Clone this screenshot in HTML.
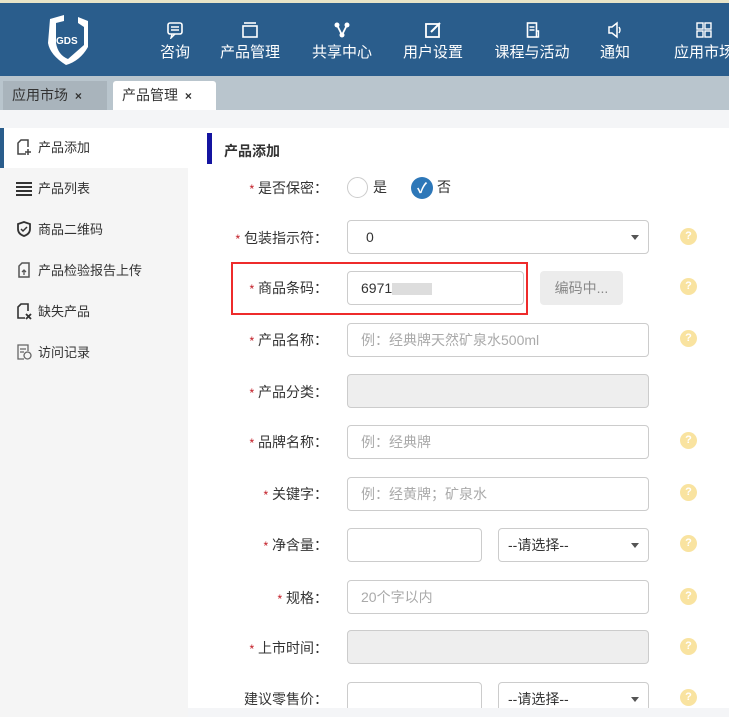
<!DOCTYPE html>
<html><head><meta charset="utf-8"><style>
*{margin:0;padding:0;box-sizing:border-box}
body{width:729px;height:717px;overflow:hidden;background:#fff;font-family:"Liberation Sans","Noto Sans CJK SC",sans-serif;position:relative}
.a{position:absolute}
.hdr{left:0;top:0;width:729px;height:76px;background:#2a5d8c;border-top:3px solid #e8e4c8}
.nav{position:absolute;top:0;height:73px;color:#fff;font-size:15px;text-align:center;transform:translateX(-50%);white-space:nowrap}
.nav svg{display:block;margin:18px auto 2px}
.tabs{left:0;top:76px;width:729px;height:34px;background:#b9c5cd}
.tab{position:absolute;top:5px;height:29px;font-size:14px;line-height:29px;padding-left:9px;color:#333}
.side{left:0;top:128px;width:188px;height:589px;background:#f5f5f5}
.si{position:absolute;left:16px;font-size:13px;color:#333;height:20px;line-height:20px}
.si svg{position:absolute;left:0;top:1px}
.si span{position:absolute;left:22px;white-space:nowrap}
.lbl{position:absolute;right:401px;font-size:14px;color:#333;white-space:nowrap}
.lbl b{color:#c0141e;font-weight:normal;font-size:12px}
.in{position:absolute;height:34px;border:1px solid #ccc;border-radius:4px;background:#fff;font-size:14px;color:#aaa;line-height:32px;padding-left:13px}
.dis{background:#eee}
.sel{color:#333}
.sel:after{content:"";position:absolute;right:9px;top:14px;border:4px solid transparent;border-top:5px solid #555}
.help{position:absolute;left:680px;width:17px;height:17px;border-radius:50%;background:#f9e3a0;color:#fff;font-size:11px;line-height:17px;text-align:center;font-weight:bold}
</style></head><body>
<div class="a hdr">
 <svg class="a" style="left:44px;top:10px" width="46" height="52" viewBox="0 0 46 52"><path d="M6 6 L20 2 L20 8 L12 10 L12 30 Q14 42 24 46 L40 32 L40 14 L34 10 L34 4 L44 8 L44 34 Q36 48 22 52 Q6 42 4 30 Z" fill="#fff"/><text x="12" y="31" font-size="10" fill="#fff" font-weight="bold" font-family="Liberation Sans">GDS</text></svg>
 <div class="nav" style="left:175px"><svg width="18" height="18" viewBox="0 0 18 18"><rect x="2" y="2" width="14" height="11" rx="2" fill="none" stroke="#fff" stroke-width="1.6"/><path d="M5 6h8M5 9h8M6 13l-1 4 4-4" stroke="#fff" fill="none" stroke-width="1.4"/></svg>咨询</div>
 <div class="nav" style="left:250px"><svg width="18" height="18" viewBox="0 0 18 18"><rect x="2" y="5" width="14" height="11" fill="none" stroke="#fff" stroke-width="1.6"/><path d="M3 2h12" stroke="#fff" stroke-width="1.6"/></svg>产品管理</div>
 <div class="nav" style="left:342px"><svg width="18" height="18" viewBox="0 0 18 18"><circle cx="4" cy="4" r="2.5" fill="#fff"/><circle cx="14" cy="4" r="2.5" fill="#fff"/><circle cx="9" cy="14" r="2.5" fill="#fff"/><path d="M4 4l5 10 5-10" stroke="#fff" fill="none" stroke-width="1.8"/></svg>共享中心</div>
 <div class="nav" style="left:433px"><svg width="18" height="18" viewBox="0 0 18 18"><rect x="2" y="3" width="13" height="13" fill="none" stroke="#fff" stroke-width="1.8"/><path d="M7 11l9-9" stroke="#fff" stroke-width="2"/></svg>用户设置</div>
 <div class="nav" style="left:532px"><svg width="18" height="18" viewBox="0 0 18 18"><rect x="4" y="2" width="9" height="14" fill="none" stroke="#fff" stroke-width="1.6"/><path d="M6 6h5M6 9h5M13 10h2v6h-2" stroke="#fff" fill="none" stroke-width="1.4"/></svg>课程与活动</div>
 <div class="nav" style="left:615px"><svg width="18" height="18" viewBox="0 0 18 18"><path d="M3 6h3l5-4v14l-5-4H3z" fill="none" stroke="#fff" stroke-width="1.5"/><path d="M13 6q2 3 0 6" stroke="#fff" fill="none" stroke-width="1.4"/></svg>通知</div>
 <div class="nav" style="left:704px"><svg width="18" height="18" viewBox="0 0 18 18"><rect x="2" y="2" width="6" height="6" fill="none" stroke="#fff" stroke-width="1.4"/><rect x="10" y="2" width="6" height="6" fill="none" stroke="#fff" stroke-width="1.4"/><rect x="2" y="10" width="6" height="6" fill="none" stroke="#fff" stroke-width="1.4"/><rect x="10" y="10" width="6" height="6" fill="none" stroke="#fff" stroke-width="1.4"/></svg>应用市场</div>
</div>
<div class="a tabs">
 <div class="tab" style="left:3px;width:104px;background:#a9b4bc">应用市场 <b style="font-size:12px;margin-left:3px">×</b></div>
 <div class="tab" style="left:113px;width:103px;background:#fff;border-radius:3px 3px 0 0">产品管理 <b style="font-size:12px;margin-left:3px">×</b></div>
</div>
<div class="a" style="left:0;top:110px;width:729px;height:18px;background:#f4f5f7"></div>
<div class="a side"></div>
<div class="a" style="left:0;top:128px;width:188px;height:40px;background:#fff;border-left:4px solid #2a5d8c"></div>
<div class="si" style="top:138px"><svg width="16" height="17" viewBox="0 0 16 17"><path d="M10 15H2V4l3-3h7v7" fill="none" stroke="#444" stroke-width="1.5"/><path d="M12 10v6M9 13h6" stroke="#444" stroke-width="1.5"/></svg><span>产品添加</span></div>
<div class="si" style="top:179px"><svg width="16" height="16" viewBox="0 0 16 16"><path d="M0 3h16M0 7h16M0 11h16M0 15h16" stroke="#333" stroke-width="2"/></svg><span>产品列表</span></div>
<div class="si" style="top:220px"><svg width="16" height="16" viewBox="0 0 16 16"><path d="M8 1l6 2v5q0 5-6 7-6-2-6-7V3z" fill="none" stroke="#333" stroke-width="1.8"/><path d="M5 8l2 2 4-4" stroke="#333" fill="none" stroke-width="1.5"/></svg><span>商品二维码</span></div>
<div class="si" style="top:261px"><svg width="16" height="16" viewBox="0 0 16 16"><path d="M3 15V4l3-3h7v14z" fill="none" stroke="#555" stroke-width="1.5"/><path d="M8 13V8M6 10l2-2 2 2" stroke="#555" fill="none" stroke-width="1.3"/></svg><span>产品检验报告上传</span></div>
<div class="si" style="top:302px"><svg width="16" height="17" viewBox="0 0 16 17"><path d="M9 15H2V4l3-3h7v7" fill="none" stroke="#333" stroke-width="1.6"/><path d="M10 11l5 5M15 11l-5 5" stroke="#333" stroke-width="1.8"/></svg><span>缺失产品</span></div>
<div class="si" style="top:343px"><svg width="16" height="16" viewBox="0 0 16 16"><path d="M8 15H2V1h10v6" fill="none" stroke="#666" stroke-width="1.3"/><path d="M4 5h6M4 8h4" stroke="#666" stroke-width="1.2"/><circle cx="11.5" cy="11.5" r="3.5" fill="none" stroke="#666" stroke-width="1.3"/></svg><span>访问记录</span></div>

<div class="a" style="left:207px;top:133px;width:5px;height:31px;background:#1414a0"></div>
<div class="a" style="left:224px;top:141px;font-size:14px;font-weight:bold;color:#333">产品添加</div>

<div class="lbl" style="top:178px"><b>*</b> 是否保密：</div>
<div class="a" style="left:347px;top:177px;width:21px;height:21px;border:1px solid #ccc;border-radius:50%"></div>
<div class="a" style="left:373px;top:177px;font-size:14px;color:#333">是</div>
<div class="a" style="left:411px;top:177px;width:22px;height:22px;background:#2d77b8;border-radius:50%;color:#fff;font-size:14px;line-height:22px;text-align:center;font-weight:bold">✓</div>
<div class="a" style="left:437px;top:177px;font-size:14px;color:#333">否</div>

<div class="lbl" style="top:228px"><b>*</b> 包装指示符：</div>
<div class="in sel" style="left:347px;top:220px;width:302px;color:#333;padding-left:18px">0</div>
<div class="help" style="top:228px">?</div>

<div class="a" style="left:231px;top:262px;width:297px;height:53px;border:2px solid #ee2b2b"></div>
<div class="lbl" style="top:278px"><b>*</b> 商品条码：</div>
<div class="in" style="left:347px;top:271px;width:177px;color:#333">6971<span style="display:inline-block;width:40px;height:12px;background:#ddd;vertical-align:middle"></span></div>
<div class="a" style="left:540px;top:271px;width:83px;height:34px;background:#ececec;border-radius:4px;font-size:14px;color:#888;line-height:34px;text-align:center">编码中...</div>
<div class="help" style="top:278px">?</div>

<div class="lbl" style="top:330px"><b>*</b> 产品名称：</div>
<div class="in" style="left:347px;top:323px;width:302px">例：经典牌天然矿泉水500ml</div>
<div class="help" style="top:330px">?</div>

<div class="lbl" style="top:382px"><b>*</b> 产品分类：</div>
<div class="in dis" style="left:347px;top:374px;width:302px"></div>

<div class="lbl" style="top:432px"><b>*</b> 品牌名称：</div>
<div class="in" style="left:347px;top:425px;width:302px">例：经典牌</div>
<div class="help" style="top:432px">?</div>

<div class="lbl" style="top:484px"><b>*</b> 关键字：</div>
<div class="in" style="left:347px;top:477px;width:302px">例：经黄牌；矿泉水</div>
<div class="help" style="top:484px">?</div>

<div class="lbl" style="top:535px"><b>*</b> 净含量：</div>
<div class="in" style="left:347px;top:528px;width:135px"></div>
<div class="in sel" style="left:498px;top:528px;width:151px;padding-left:9px">--请选择--</div>
<div class="help" style="top:535px">?</div>

<div class="lbl" style="top:588px"><b>*</b> 规格：</div>
<div class="in" style="left:347px;top:580px;width:302px">20个字以内</div>
<div class="help" style="top:588px">?</div>

<div class="lbl" style="top:638px"><b>*</b> 上市时间：</div>
<div class="in dis" style="left:347px;top:630px;width:302px"></div>
<div class="help" style="top:638px">?</div>

<div class="lbl" style="top:689px">建议零售价：</div>
<div class="in" style="left:347px;top:682px;width:135px"></div>
<div class="in sel" style="left:498px;top:682px;width:151px;padding-left:9px">--请选择--</div>
<div class="help" style="top:689px">?</div>
<div class="a" style="left:188px;top:708px;width:541px;height:9px;background:#f4f5f7"></div>
</body></html>
